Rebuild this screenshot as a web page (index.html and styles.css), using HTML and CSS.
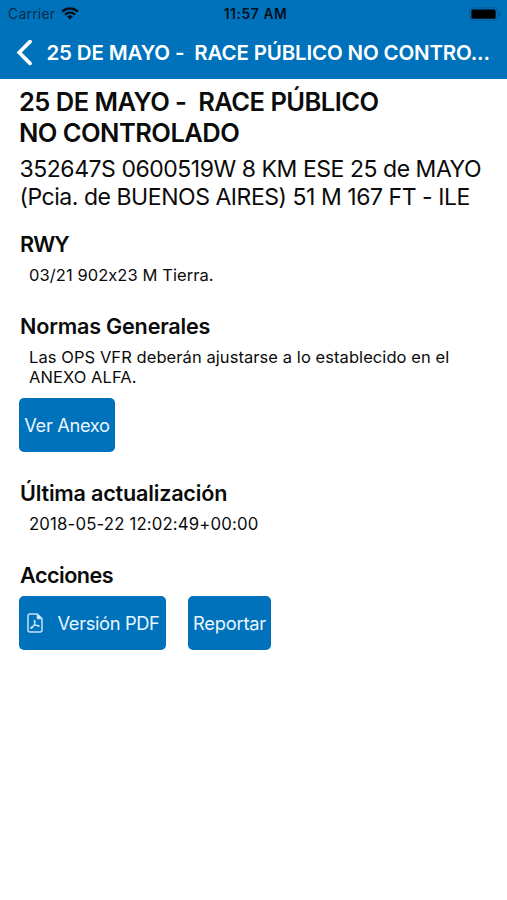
FILE: index.html
```html
<!DOCTYPE html>
<html lang="es">
<head>
<meta charset="utf-8">
<title>25 DE MAYO</title>
<link rel="stylesheet" href="styles.css">
</head>
<body>
<header class="header">
  <div class="status">
    <div class="status-left">
      <span class="carrier">Carrier</span>
      <svg class="wifi" width="18" height="13" viewBox="0 0 18 13" fill="none" stroke="#04101a">
        <path d="M1.2 4.6a11.3 11.3 0 0 1 15.6 0" stroke-width="2.3"/>
        <path d="M4 7.7a7.2 7.2 0 0 1 10 0" stroke-width="2.2"/>
        <path d="M9 12.6l-2.8-3a4 4 0 0 1 5.6 0z" fill="#04101a" stroke="none"/>
      </svg>
    </div>
    <span class="clock">11:57 AM</span>
    <div class="status-right">
      <svg class="battery" width="32" height="15" viewBox="0 0 32 15">
        <rect x=".7" y=".9" width="27.6" height="12.6" rx="3.4" fill="none" stroke="#04609f" stroke-width="1.2"/>
        <rect x="2.4" y="2.6" width="24.2" height="9.2" rx="1.6" fill="#000"/>
        <path d="M29.8 5.1q1.7.7 1.7 2.1t-1.7 2.1z" fill="#04518a"/>
      </svg>
    </div>
  </div>
  <div class="navbar">
    <svg class="back" width="17" height="27" viewBox="0 0 17 27" fill="none" stroke="#fff" stroke-width="3.7" stroke-linecap="round">
      <path d="M14 2.6L3.2 13.5l10.8 10.9"/>
    </svg>
    <div class="nav-title">25 DE MAYO -&nbsp; RACE PÚBLICO NO CONTRO...</div>
  </div>
</header>
<main class="content">
  <h1 class="title">25 DE MAYO -&nbsp; RACE PÚBLICO<br>NO CONTROLADO</h1>
  <p class="location">352647S 0600519W 8 KM ESE 25 de MAYO<br>(Pcia. de BUENOS AIRES) 51 M 167 FT - ILE</p>
  <section class="section first">
    <h2 class="heading rwy">RWY</h2>
    <p class="text runway">03/21 902x23 M Tierra.</p>
  </section>
  <section class="section rules">
    <h2 class="heading">Normas Generales</h2>
    <p class="text">Las OPS VFR deberán ajustarse a lo establecido en el<br>ANEXO ALFA.</p>
    <div class="actions">
      <button class="button annex">Ver Anexo</button>
    </div>
  </section>
  <section class="section">
    <h2 class="heading">Última actualización</h2>
    <p class="text date">2018-05-22 12:02:49+00:00</p>
  </section>
  <section class="section">
    <h2 class="heading acciones">Acciones</h2>
    <div class="actions last">
      <button class="button pdf">
        <svg width="16" height="20" viewBox="0 0 16 20" fill="none" stroke="#c3e2f6" stroke-width="1.5" stroke-linejoin="round">
          <path d="M3 1h7.2L15 5.8V17a2 2 0 0 1-2 2H3a2 2 0 0 1-2-2V3a2 2 0 0 1 2-2z"/>
          <path d="M10.2 1v4.8H15z" fill="#e8f6ff" stroke-width="1"/>
          <path d="M7.4 7.2c1.1 0 .6 2.4-.1 4.1-.8 1.9-2.2 4.2-3.3 4.2-1.2-.6.9-2.1 3.1-2.7 2-.6 4.9-.9 5.1.1.1 1.2-2.4.4-3.7-1.2-1-1.3-1.8-4.5-1.1-4.5z" stroke-width="1.1"/>
        </svg>
        <span>Versión PDF</span>
      </button>
      <button class="button report">Reportar</button>
    </div>
  </section>
</main>
</body>
</html>
```
FILE: styles.css
```css
* { box-sizing: border-box; }

body {
  margin: 0;
  min-height: 100vh;
  background: #fff;
  color: #0b0b0b;
  font-family: Inter, "Liberation Sans", sans-serif;
  font-feature-settings: "calt" 0;
}

h1, h2, p { margin: 0; white-space: nowrap; }

.header {
  height: 79px;
  background: #0072bc;
}

.status {
  display: grid;
  grid-template-columns: 1fr auto 1fr;
  align-items: center;
  height: 28px;
  padding: 0 6px 0 8px;
  font-size: 13.8px;
  color: #04101a;
}

.status-left { display: flex; align-items: center; gap: 6px; }
.status-right { display: flex; justify-content: flex-end; }
.carrier { letter-spacing: 0.3px; color: #052b47; }
.wifi { margin-top: -2px; }
.clock { padding-left: 2px; font-weight: 600; letter-spacing: 0.6px; }

.navbar {
  display: flex;
  align-items: center;
  gap: 13.5px;
  height: 48px;
  padding-left: 16px;
}

.nav-title {
  color: #fff;
  font-size: 20.5px;
  font-weight: 600;
  letter-spacing: -0.16px;
  white-space: nowrap;
}

.content { padding: 8px 20px; }

.title {
  margin-left: -1px;
  font-size: 25.5px;
  font-weight: 600;
  line-height: 30.5px;
  letter-spacing: -0.53px;
}

.location {
  margin: 7px 0 0 -0.5px;
  font-size: 23px;
  line-height: 28px;
  letter-spacing: -0.46px;
}

.section { margin-top: 28px; }
.first { margin-top: 20px; }
.rules { margin-top: 27px; }

.heading {
  font-size: 21.6px;
  font-weight: 600;
  line-height: 26px;
  letter-spacing: -0.2px;
}

.rwy { letter-spacing: -0.9px; }
.acciones { letter-spacing: -0.5px; }

.text {
  margin: 8px 0 0 9px;
  font-size: 16.5px;
  line-height: 20.5px;
  letter-spacing: 0.07px;
}

.date { font-size: 16.8px; letter-spacing: 0.14px; }

.actions {
  display: flex;
  gap: 22px;
  margin: 10px 0 0 -1px;
}

.last { margin-top: 8px; }

.button {
  display: flex;
  align-items: center;
  justify-content: center;
  height: 54px;
  padding: 0;
  border: 0;
  border-radius: 5px;
  background: #0072bc;
  color: #e8f6ff;
  font: inherit;
  font-size: 18.3px;
  letter-spacing: -0.35px;
}

.annex { width: 96px; }
.pdf { width: 147px; padding-left: 2px; gap: 14px; }
.report { width: 83px; letter-spacing: -0.2px; }
```
